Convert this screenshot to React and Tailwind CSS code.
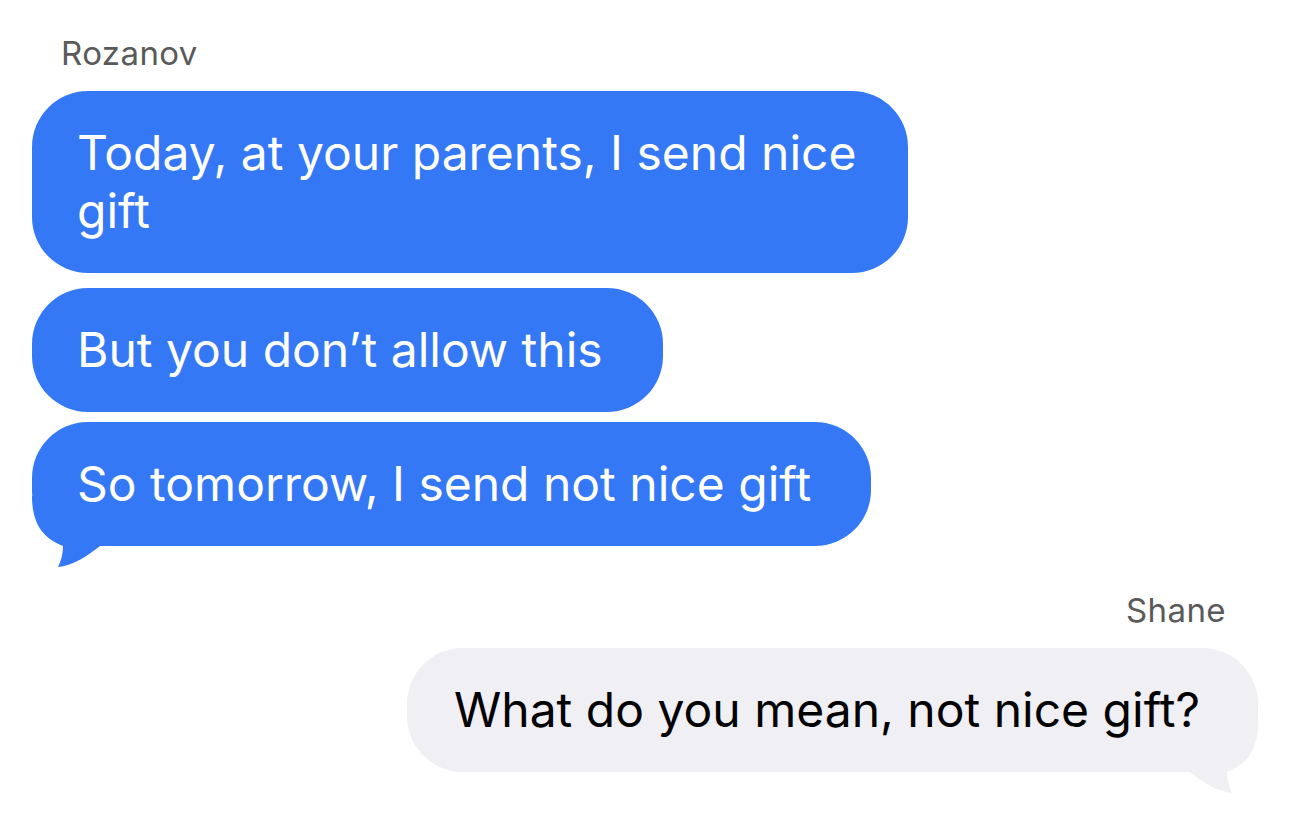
import React from 'react';

const font = { fontFamily: 'Inter, "Liberation Sans", sans-serif' };

const TailLeft = ({ color }) => (
  <svg className="absolute left-0 top-[calc(100%-50px)] w-[80px] h-[75px]" viewBox="0 0 80 75">
    <path d="M0 0 C0 30 13 43 31 50 C31 58 29 65 26 71 C40 70 54 61 68 50 L68 0 Z" fill={color} />
  </svg>
);

const TailRight = ({ color }) => (
  <svg className="absolute right-0 top-[calc(100%-50px)] w-[80px] h-[75px] -scale-x-100" viewBox="0 0 80 75">
    <path d="M0 0 C0 30 13 43 31 50 C31 58 29 65 26 71 C40 70 54 61 68 50 L68 0 Z" fill={color} />
  </svg>
);

const Bubble = ({ children, mine, tail, className = '' }) => (
  <div
    className={`relative rounded-[56px] py-[33px] text-[48px] leading-[58px] whitespace-nowrap ${
      mine ? 'bg-[#efeff4] text-black self-end pl-[47px]' : 'bg-[#3478f6] text-white self-start pl-[45px]'
    } ${className}`}
  >
    {tail && (mine ? <TailRight color="#efeff4" /> : <TailLeft color="#3478f6" />)}
    <span className="relative">{children}</span>
  </div>
);

export default function App() {
  return (
    <div className="w-[1290px] h-[826px] bg-white px-[32px] flex flex-col" style={font}>
      <div className="mt-[33px] pl-[29px] text-[33px] leading-[40px] tracking-[0.4px] text-[#5a5a5a]">Rozanov</div>
      <Bubble className="mt-[18px] pr-[52px]">
        Today, at your parents, I send nice
        <br />
        gift
      </Bubble>
      <Bubble className="mt-[15px] pr-[60px]">But you don’t allow this</Bubble>
      <Bubble className="mt-[10px] pr-[60px]" tail>So tomorrow, I send not nice gift</Bubble>
      <div className="mt-[44px] self-end pr-[32px] text-[33px] leading-[40px] tracking-[0.4px] text-[#5a5a5a]">Shane</div>
      <Bubble className="mt-[18px] pr-[58px]" mine tail>What do you mean, not nice gift?</Bubble>
    </div>
  );
}
